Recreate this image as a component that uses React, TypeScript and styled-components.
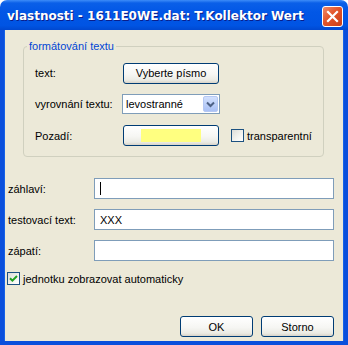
import React from "react";
import styled, { createGlobalStyle } from "styled-components";

const GlobalStyle = createGlobalStyle`
  html, body {
    margin: 0;
    padding: 0;
    background: #fff;
  }
  body {
    font-family: "Liberation Sans", Arial, sans-serif;
    font-size: 11px;
    color: #000;
  }
`;

export default function App() {
  return (
    <>
      <GlobalStyle />
      <Window>
        <TitleBar>
          <Title>vlastnosti - 1611E0WE.dat: T.Kollektor Wert</Title>
          <CloseButton aria-label="close">
            <svg width="13" height="13" viewBox="0 0 13 13">
              <path
                d="M2 2 L11 11 M11 2 L2 11"
                stroke="#fff"
                strokeWidth="2.2"
                strokeLinecap="square"
              />
            </svg>
          </CloseButton>
        </TitleBar>

        <Body>
          <GroupBox>
            <Legend>formátování textu</Legend>
            <GroupGrid>
              <Label>text:</Label>
              <XPButton $w={96}>Vyberte písmo</XPButton>
              <span />

              <Label>vyrovnání textu:</Label>
              <Select>
                <SelectText>levostranné</SelectText>
                <SelectArrow>
                  <svg width="9" height="7" viewBox="0 0 9 7">
                    <path
                      d="M1 1.5 L4.5 5 L8 1.5"
                      stroke="#4D6185"
                      strokeWidth="2"
                      fill="none"
                    />
                  </svg>
                </SelectArrow>
              </Select>
              <span />

              <Label>Pozadí:</Label>
              <XPButton $w={96}>
                <Swatch $color="#FFFF80" />
              </XPButton>
              <CheckRow $inset={11}>
                <CheckBox />
                <span>transparentní</span>
              </CheckRow>
            </GroupGrid>
          </GroupBox>

          <FieldGrid>
            <Label>záhlaví:</Label>
            <Field>
              <Caret />
            </Field>

            <Label>testovací text:</Label>
            <Field>XXX</Field>

            <Label>zápatí:</Label>
            <Field />
          </FieldGrid>

          <CheckRow $inset={-1} $top={11}>
            <CheckBox>
              <svg width="9" height="9" viewBox="0 0 9 9">
                <path
                  d="M1 4.2 L3.4 6.6 L8 2"
                  stroke="#21A121"
                  strokeWidth="2"
                  fill="none"
                />
              </svg>
            </CheckBox>
            <span>jednotku zobrazovat automaticky</span>
          </CheckRow>

          <Footer>
            <XPButton $w={73}>OK</XPButton>
            <XPButton $w={73}>Storno</XPButton>
          </Footer>
        </Body>
      </Window>
    </>
  );
}

const Window = styled.div`
  width: 348px;
  height: 345px;
  display: flex;
  flex-direction: column;
`;

const TitleBar = styled.div`
  height: 30px;
  flex: none;
  box-sizing: border-box;
  display: flex;
  align-items: center;
  justify-content: space-between;
  padding: 2px 5px 0 7px;
  border-radius: 7px 7px 0 0;
  background: linear-gradient(
    to bottom,
    #3d8cf8 0px,
    #0a5fe8 3px,
    #0257e6 40%,
    #0054e3 85%,
    #0048d0 100%
  );
`;

const Title = styled.div`
  color: #fff;
  font-family: "DejaVu Sans", sans-serif;
  font-weight: bold;
  font-size: 12px;
  letter-spacing: 0px;
  text-shadow: 1px 1px 0 #0a1e8a;
  white-space: nowrap;
`;

const CloseButton = styled.div`
  width: 21px;
  height: 21px;
  box-sizing: border-box;
  border: 1px solid #fff;
  border-radius: 3px;
  background: linear-gradient(135deg, #f08a6a 0%, #e2542a 45%, #c9401a 100%);
  display: flex;
  align-items: center;
  justify-content: center;
`;

const Body = styled.div`
  flex: 1;
  display: flex;
  flex-direction: column;
  box-sizing: border-box;
  background: #ece9d8;
  border: solid #0a4fdc;
  border-width: 0 4px 4px 4px;
  box-shadow: inset 1px 0 0 #1662e8, inset -1px 0 0 #1662e8;
  padding: 9px 10px 4px 4px;
`;

const GroupBox = styled.fieldset`
  margin: 0 10px 0 15px;
  padding: 10px 0 10px 11px;
  border: 1px solid #d0d0bf;
  border-radius: 4px;
`;

const Legend = styled.legend`
  color: #0046d5;
  line-height: 14px;
  padding: 0 2px;
  margin-left: -8px;
`;

const GroupGrid = styled.div`
  display: grid;
  grid-template-columns: 88px 97px auto;
  grid-template-rows: 20px 20px 21px;
  row-gap: 11px;
  align-items: center;
`;

const Label = styled.span`
  white-space: nowrap;
`;

const XPButton = styled.button<{ $w: number }>`
  box-sizing: border-box;
  width: ${(p) => p.$w}px;
  height: 21px;
  padding: 0;
  display: flex;
  align-items: center;
  justify-content: center;
  border: 1px solid #003c74;
  border-radius: 3px;
  background: linear-gradient(
    to bottom,
    #ffffff 0%,
    #f6f6f3 55%,
    #ebebe4 85%,
    #d8d3c8 100%
  );
  font-family: "Liberation Sans", Arial, sans-serif;
  font-size: 11px;
  color: #000;
`;

const Swatch = styled.span<{ $color: string }>`
  width: 60px;
  height: 13px;
  background: ${(p) => p.$color};
`;

const Select = styled.div`
  box-sizing: border-box;
  width: 98px;
  height: 20px;
  margin-left: -1px;
  border: 1px solid #7f9db9;
  background: #fff;
  display: flex;
  align-items: center;
  justify-content: space-between;
  padding: 1px;
`;

const SelectText = styled.span`
  padding-left: 2px;
`;

const SelectArrow = styled.span`
  width: 15px;
  height: 16px;
  box-sizing: border-box;
  border: 1px solid #b5c8f3;
  border-radius: 2px;
  background: linear-gradient(to bottom, #d2e0fd 0%, #b9cdf8 60%, #aac1f5 100%);
  display: flex;
  align-items: center;
  justify-content: center;
`;

const CheckRow = styled.label<{ $inset: number; $top?: number }>`
  display: flex;
  align-items: center;
  gap: 3px;
  margin-left: ${(p) => p.$inset}px;
  margin-top: ${(p) => p.$top ?? 0}px;
  white-space: nowrap;
`;

const CheckBox = styled.span`
  width: 13px;
  height: 13px;
  box-sizing: border-box;
  border: 1px solid #1c5180;
  background: linear-gradient(135deg, #dcdcd7 0%, #f4f4f0 60%, #ffffff 100%);
  display: flex;
  align-items: center;
  justify-content: center;
`;

const FieldGrid = styled.div`
  margin-top: 21px;
  display: grid;
  grid-template-columns: 86px 1fr;
  grid-auto-rows: 21px;
  row-gap: 10px;
  align-items: center;
`;

const Field = styled.div`
  box-sizing: border-box;
  height: 21px;
  border: 1px solid #7f9db9;
  background: #fff;
  display: flex;
  align-items: center;
  padding-left: 5px;
`;

const Caret = styled.span`
  width: 1px;
  height: 13px;
  background: #000;
`;

const Footer = styled.div`
  margin-top: auto;
  display: flex;
  justify-content: flex-end;
  gap: 8px;
`;
